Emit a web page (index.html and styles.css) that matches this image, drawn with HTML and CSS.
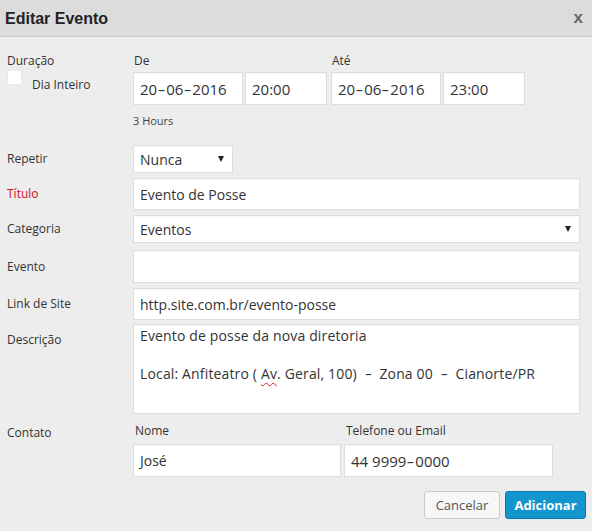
FILE: index.html
```html
<!DOCTYPE html>
<html lang="pt">
<head>
<meta charset="utf-8">
<title>Editar Evento</title>
<link rel="stylesheet" href="styles.css">
</head>
<body>
<div class="dialog">
  <div class="header">
    <h1 class="title">Editar Evento</h1>
    <span class="close">x</span>
  </div>
  <div class="content">
    <div class="row row-duration">
      <div class="label-col">
        <div class="label">Duração</div>
        <div class="allday">
          <span class="checkbox"></span>
          <span class="allday-text">Dia Inteiro</span>
        </div>
      </div>
      <div class="field-col">
        <div class="dates">
          <div class="date-group">
            <div class="sublabel">De</div>
            <div class="pair">
              <div class="input date">20<span class="dash">-</span>06<span class="dash">-</span>2016</div>
              <div class="input time">20:00</div>
            </div>
          </div>
          <div class="date-group">
            <div class="sublabel">Até</div>
            <div class="pair">
              <div class="input date">20<span class="dash">-</span>06<span class="dash">-</span>2016</div>
              <div class="input time">23:00</div>
            </div>
          </div>
        </div>
        <div class="hours">3 Hours</div>
      </div>
    </div>

    <div class="row row-repeat">
      <div class="label">Repetir</div>
      <div class="select select-small">Nunca<span class="arrow"></span></div>
    </div>

    <div class="row row-title">
      <div class="label label-required">Título</div>
      <div class="input input-title">Evento de Posse</div>
    </div>

    <div class="row row-cat">
      <div class="label">Categoria</div>
      <div class="select select-wide">Eventos<span class="arrow"></span></div>
    </div>

    <div class="row row-event">
      <div class="label">Evento</div>
      <div class="input"></div>
    </div>

    <div class="row row-link">
      <div class="label">Link de Site</div>
      <div class="input">http.site.com.br/evento-posse</div>
    </div>

    <div class="row row-desc">
      <div class="label label-top">Descrição</div>
      <div class="textarea">
        <div class="line">Evento de posse da nova diretoria</div>
        <div class="line">&nbsp;</div>
        <div class="line">Local: Anfiteatro ( <span class="spell">Av</span>. Geral, 100) <span class="dash-wide">-</span> Zona 00 <span class="dash-wide">-</span> Cianorte/PR</div>
      </div>
    </div>

    <div class="row row-contact">
      <div class="label label-contact">Contato</div>
      <div class="contact">
        <div class="contact-group name-group">
          <div class="sublabel sublabel-contact">Nome</div>
          <div class="input">José</div>
        </div>
        <div class="contact-group phone-group">
          <div class="sublabel sublabel-contact">Telefone ou Email</div>
          <div class="input phone">44 9999<span class="dash">-</span>0000</div>
        </div>
      </div>
    </div>

    <div class="actions">
      <button class="btn btn-cancel">Cancelar</button>
      <button class="btn btn-primary">Adicionar</button>
    </div>
  </div>
</div>
</body>
</html>
```

FILE: styles.css
```css
html, body {
  margin: 0;
  padding: 0;
}

body {
  width: 592px;
  height: 531px;
  background: #ededed;
  font-family: "Open Sans", "DejaVu Sans", sans-serif;
  color: #333;
  overflow: hidden;
}

.dialog {
  width: 592px;
  height: 531px;
  background: #ededed;
}

.header {
  height: 36px;
  background: #dcdcdc;
  border-bottom: 1px solid #c9c9c9;
  display: flex;
  align-items: center;
  justify-content: space-between;
  padding: 0 9px 0 5px;
}

.title {
  margin: 0;
  font-family: "Liberation Sans", Arial, sans-serif;
  font-weight: bold;
  font-size: 16px;
  color: #222;
  padding-top: 1px;
}

.close {
  font-family: "Liberation Sans", Arial, sans-serif;
  font-weight: bold;
  font-size: 17px;
  color: #666;
  padding-bottom: 1px;
}

.content {
  padding: 16px 6px 0 7px;
}

.row {
  display: grid;
  grid-template-columns: 126px 447px;
  align-items: center;
}

.label {
  font-size: 12px;
  line-height: 16px;
  color: #333;
}

.label-required {
  color: #d0112b;
}

.label-top {
  align-self: start;
  padding-top: 8px;
}

.label-contact {
  align-self: start;
  padding-top: 2px;
}

/* Duration row */
.row-duration {
  align-items: start;
}

.allday {
  display: flex;
  align-items: flex-start;
  margin-top: 1px;
}

.checkbox {
  width: 15px;
  height: 15px;
  background: #fff;
  border: 1px solid #e8e8e8;
  box-sizing: border-box;
}

.allday-text {
  font-size: 12px;
  line-height: 16px;
  margin-left: 10px;
  padding-top: 7px;
}

.dates {
  display: flex;
  gap: 4px;
}

.sublabel {
  font-size: 12px;
  line-height: 16px;
  padding-left: 1px;
  color: #333;
}

.pair {
  display: flex;
  gap: 2px;
  margin-top: 3px;
}

.hours {
  font-size: 11px;
  line-height: 14px;
  margin-top: 9px;
  color: #444;
}

/* Controls */
.input,
.select,
.textarea {
  box-sizing: border-box;
  background: #fff;
  border: 1px solid #dedede;
  box-shadow: inset 0 1px 1px rgba(0, 0, 0, 0.03);
  font-size: 14px;
  color: #333;
  padding: 0 6px;
}

.input {
  height: 33px;
  display: flex;
  align-items: center;
  white-space: pre;
}

.dash {
  display: inline-block;
  width: 9px;
  text-align: center;
  transform: scaleX(1.6);
}

.dash-wide {
  display: inline-block;
  width: 9px;
  margin: 0 3px;
  text-align: center;
  transform: scaleX(1.6);
}

.date {
  width: 110px;
  font-size: 15px;
}

.time {
  width: 82px;
  font-size: 15px;
}

.phone {
  font-size: 15px;
}

.select {
  height: 28px;
  display: flex;
  align-items: center;
  justify-content: space-between;
  padding-right: 8px;
}

.select-small {
  width: 100px;
}

.arrow {
  width: 0;
  height: 0;
  border-left: 3.5px solid transparent;
  border-right: 3.5px solid transparent;
  border-top: 6px solid #222;
}

.row-repeat {
  margin-top: 17px;
}

.row-title {
  margin-top: 5px;
}

.input-title {
  height: 32px;
}

.row-cat {
  margin-top: 5px;
}

.row-cat .select {
  height: 28px;
}

.row-event {
  margin-top: 7px;
}

.row-link {
  margin-top: 5px;
}

.row-link .input {
  height: 32px;
}

.row-desc {
  margin-top: 4px;
  align-items: start;
}

.textarea {
  height: 90px;
  padding: 1px 6px;
  line-height: 19px;
  letter-spacing: 0.15px;
}

.spell {
  text-decoration: underline wavy #e0242a;
  text-decoration-thickness: 1px;
  text-underline-offset: 3px;
}

/* Contact */
.row-contact {
  margin-top: 9px;
  align-items: start;
}

.contact {
  display: flex;
  gap: 3px;
}

.sublabel-contact {
  padding-left: 2px;
  margin-bottom: 5px;
}

.name-group {
  width: 208px;
}

.phone-group {
  width: 209px;
}

/* Buttons */
.actions {
  display: flex;
  justify-content: flex-end;
  gap: 5px;
  margin-top: 14px;
}

.btn {
  height: 28px;
  box-sizing: border-box;
  border-radius: 3px;
  font-family: "Open Sans", "DejaVu Sans", sans-serif;
  font-size: 13px;
  padding: 0;
  cursor: pointer;
}

.btn-cancel {
  width: 76px;
  background: #f7f7f7;
  border: 1px solid #cccccc;
  color: #555;
}

.btn-primary {
  width: 81px;
  background: #1296cd;
  border: 1px solid #0b79ab;
  color: #fff;
  font-weight: 700;
}
```
